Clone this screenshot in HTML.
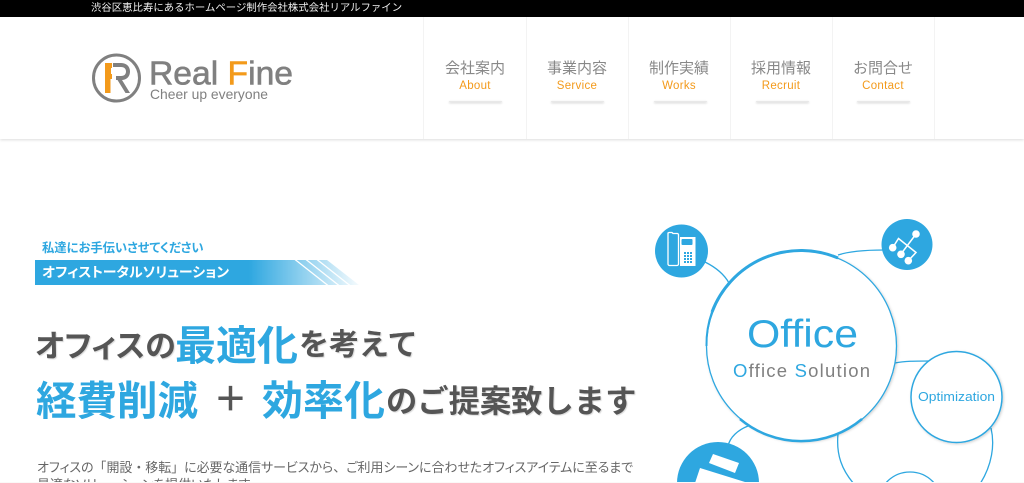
<!DOCTYPE html>
<html lang="ja"><head><meta charset="utf-8"><title>Real Fine</title>
<style>
html,body{margin:0;padding:0;background:#fff;width:1024px;height:483px;overflow:hidden;}
#w{position:absolute;left:0;top:0;width:1024px;height:483px;overflow:hidden;font-family:"Liberation Sans","Noto Sans CJK JP",sans-serif;filter:blur(.3px);}
.a{position:absolute;white-space:nowrap;line-height:1;}
#top{left:0;top:0;width:1024px;height:17px;background:#000;}
#hd{left:0;top:17px;width:1024px;height:122px;background:#fff;box-shadow:0 1px 3px rgba(0,0,0,.14);}
.v{position:absolute;top:17px;width:1px;height:122px;background:#f3f3f3;}
.j{font-size:15px;color:#888;top:60.500px;width:100px;text-align:center;}
.e{font-size:11.500px;color:#f39a1b;top:81px;width:100px;text-align:center;letter-spacing:.3px;}
.u{position:absolute;top:101px;width:53px;height:1px;background:#e8e8e8;border-radius:2px;box-shadow:0 1px 2px rgba(0,0,0,.28);}
.h{font-weight:700;color:#555;text-shadow:1px 1px 1px rgba(0,0,0,.15);}
.b{color:#2ea7e0;text-shadow:none;}
.t{font-size:12.950px;color:#666;font-feature-settings:"palt";}
.t b{font-weight:400;font-feature-settings:normal;}
</style></head><body><div id="w">
<div class="a" id="top"></div>
<div class="a" style="left:91px;top:3.500px;font-size:10.400px;color:#eee;">渋谷区恵比寿にあるホームページ制作会社株式会社リアルファイン</div>
<div class="a" id="hd"></div>
<i class="v" style="left:423px"></i><i class="v" style="left:526px"></i><i class="v" style="left:628px"></i><i class="v" style="left:730px"></i><i class="v" style="left:832px"></i><i class="v" style="left:934px"></i>

<svg class="a" style="left:85px;top:45px" width="215" height="65" viewBox="85 45 215 65">
<circle cx="116.500" cy="78" r="23" fill="none" stroke="#808080" stroke-width="3"/>
<path d="M105 63h7v5h-1v6h1v5h-1.500v14h-5.500z" fill="#f39a1b"/>
<path d="M113 63h8c6 0 9 4 9 8.500s-3 8.500-8 8.500l8 13h-4.500l-8-13h-1.500v-4h5c3.500 0 5-2 5-4.500s-1.500-4.500-5-4.500h-8z" fill="#808080"/>
<text x="149" y="84.500" font-size="33" fill="#808080" textLength="144" lengthAdjust="spacingAndGlyphs" stroke="#808080" stroke-width=".6">Real <tspan fill="#f39a1b" stroke="#f39a1b">F</tspan>ine</text>
<text x="150" y="99" font-size="14" fill="#808080" textLength="118" lengthAdjust="spacingAndGlyphs">Cheer up everyone</text>
</svg>

<div class="a j" style="left:425px">会社案内</div><div class="a e" style="left:425px">About</div><i class="u" style="left:449px"></i>
<div class="a j" style="left:527px">事業内容</div><div class="a e" style="left:527px">Service</div><i class="u" style="left:551px"></i>
<div class="a j" style="left:629px">制作実績</div><div class="a e" style="left:629px">Works</div><i class="u" style="left:654px"></i>
<div class="a j" style="left:731px">採用情報</div><div class="a e" style="left:731px">Recruit</div><i class="u" style="left:756px"></i>
<div class="a j" style="left:833px">お問合せ</div><div class="a e" style="left:833px">Contact</div><i class="u" style="left:857px"></i>

<div class="a b" style="left:42px;top:241.500px;font-size:12.300px;font-weight:700;font-feature-settings:'palt';">私達にお手伝いさせてください</div>
<svg class="a" style="left:30px;top:255px" width="340" height="35" viewBox="30 255 340 35">
<defs><linearGradient id="g" x1="35" x2="359" y1="0" y2="0" gradientUnits="userSpaceOnUse">
<stop offset="0" stop-color="#2ea7e0"/><stop offset=".66" stop-color="#2ea7e0"/><stop offset="1" stop-color="#2ea7e0" stop-opacity=".05"/></linearGradient></defs>
<path d="M35 260H327L359 285H35Z" fill="url(#g)"/>
<path d="M295 259.500L328 285.500M306 259.500L339 285.500M317 259.500L350 285.500" stroke="#fff" stroke-width="1.300" fill="none"/>
</svg>
<div class="a" style="left:42px;top:266px;font-size:13.900px;font-weight:700;color:#fff;font-feature-settings:'palt';">オフィストータルソリューション</div>

<div class="a h" style="left:35px;top:331px;font-size:31px;font-feature-settings:'palt';">オフィスの</div>
<div class="a h b" style="left:175px;top:326px;font-size:41px;">最適化</div>
<div class="a h" style="left:299px;top:331px;font-size:30px;">を考えて</div>
<div class="a h b" style="left:36px;top:381px;font-size:40.500px;">経費削減</div>
<div class="a" style="left:213.500px;top:383px;font-size:34px;color:#555;font-weight:700;">＋</div>
<div class="a h b" style="left:262px;top:381px;font-size:41px;">効率化</div>
<div class="a h" style="left:386px;top:386px;font-size:31.300px;">のご提案致します</div>
<div class="a t" style="left:37px;top:462px;">オフィスの<b>「開設・移転」</b>に必要な通信サービスから<b>、</b>ご利用シーンに合わせたオフィスアイテムに至るまで</div>
<div class="a t" style="left:37px;top:479px;">最適なソリューションを提供いたします</div>

<svg class="a" style="left:640px;top:210px" width="384" height="273" viewBox="640 210 384 273">
<defs><filter id="s" x="-10%" y="-10%" width="125%" height="125%"><feDropShadow dx="1" dy="1" stdDeviation="1.200" flood-color="#000" flood-opacity=".18"/></filter></defs>
<g fill="none" stroke="#2ea7e0" stroke-width="1.300">
<path d="M705 262C715 267 724 274 729 283"/>
<path d="M838 255C850 251 866 250 884 250"/>
<path d="M895 363C905 361 915 361 930 361"/>
<path d="M748 426C738 430 730 437 728 446"/>
<path d="M838 434C836 455 842 470 854 484"/>
<path d="M991 428C995 445 992 465 980 484"/>
<circle cx="910" cy="504" r="32"/>
</g>
<circle cx="956.500" cy="397" r="45.500" fill="#fff" stroke="#2ea7e0" stroke-width="1.500" filter="url(#s)"/>
<circle cx="801.500" cy="346" r="95" fill="#fff" stroke="#2ea7e0" stroke-width="1.300" filter="url(#s)"/>
<path d="M712 312A95 95 0 0 1 838 258" fill="none" stroke="#2ea7e0" stroke-width="3"/>
<path d="M740 419A95 95 0 0 0 862 419" fill="none" stroke="#2ea7e0" stroke-width="2.500"/>
<path d="M706.500 346A95 95 0 0 1 712 312" fill="none" stroke="#2ea7e0" stroke-width="2"/>
<text x="747" y="347" font-size="39" fill="#2ea7e0" textLength="111" lengthAdjust="spacingAndGlyphs">Office</text>
<text x="733" y="377" font-size="18.500" fill="#808080" textLength="137" lengthAdjust="spacing"><tspan fill="#2ea7e0">O</tspan>ffice <tspan fill="#2ea7e0">S</tspan>olution</text>
<text x="918" y="401" font-size="13" fill="#2ea7e0" textLength="77" lengthAdjust="spacingAndGlyphs">Optimization</text>

<circle cx="681.500" cy="251" r="26.500" fill="#2ea7e0"/>
<path d="M669 232.500h3l1 1h4.500a1.500 1.500 0 0 1 1 1.500v29a1.500 1.500 0 0 1-1.500 1.500h-7.500a1.500 1.500 0 0 1-1.500-1.500v-31z" fill="none" stroke="#fff" stroke-width="1.300"/>
<path d="M680 237h15.500v29H680z" fill="#fff"/>
<rect x="681.500" y="239" width="11" height="6" rx="1" fill="#2ea7e0"/>
<g fill="#2ea7e0"><path d="M684 252h2v2h-2zM687 252h2v2h-2zM690 252h2v2h-2zM684 255h2v2h-2zM687 255h2v2h-2zM690 255h2v2h-2zM684 258h2v2h-2zM687 258h2v2h-2zM690 258h2v2h-2zM684 261h2v2h-2zM687 261h2v2h-2zM690 261h2v2h-2z"/></g>

<circle cx="907" cy="244.500" r="25.500" fill="#2ea7e0"/>
<g stroke="#fff" stroke-width="1.500" fill="none"><path d="M916 234L901 254"/><path d="M892.700 247.700L898.500 238.500L916 252.500L908.300 260.700"/></g>
<g fill="#fff"><circle cx="916" cy="234" r="3.800"/><circle cx="892.700" cy="247.700" r="3.800"/><circle cx="901" cy="254.300" r="3.800"/><circle cx="908.300" cy="260.700" r="3.800"/></g>

<circle cx="718" cy="483" r="41" fill="#2ea7e0"/>
<path d="M713 454L739 463L735 473L709 463Z" fill="#fff"/>
<path d="M700 468L745 482V483H695Z" fill="#fff"/>
</svg>
<div class="a" style="left:0;top:482px;width:1024px;height:1px;background:#fbf8f7;"></div>
</div></body></html>
